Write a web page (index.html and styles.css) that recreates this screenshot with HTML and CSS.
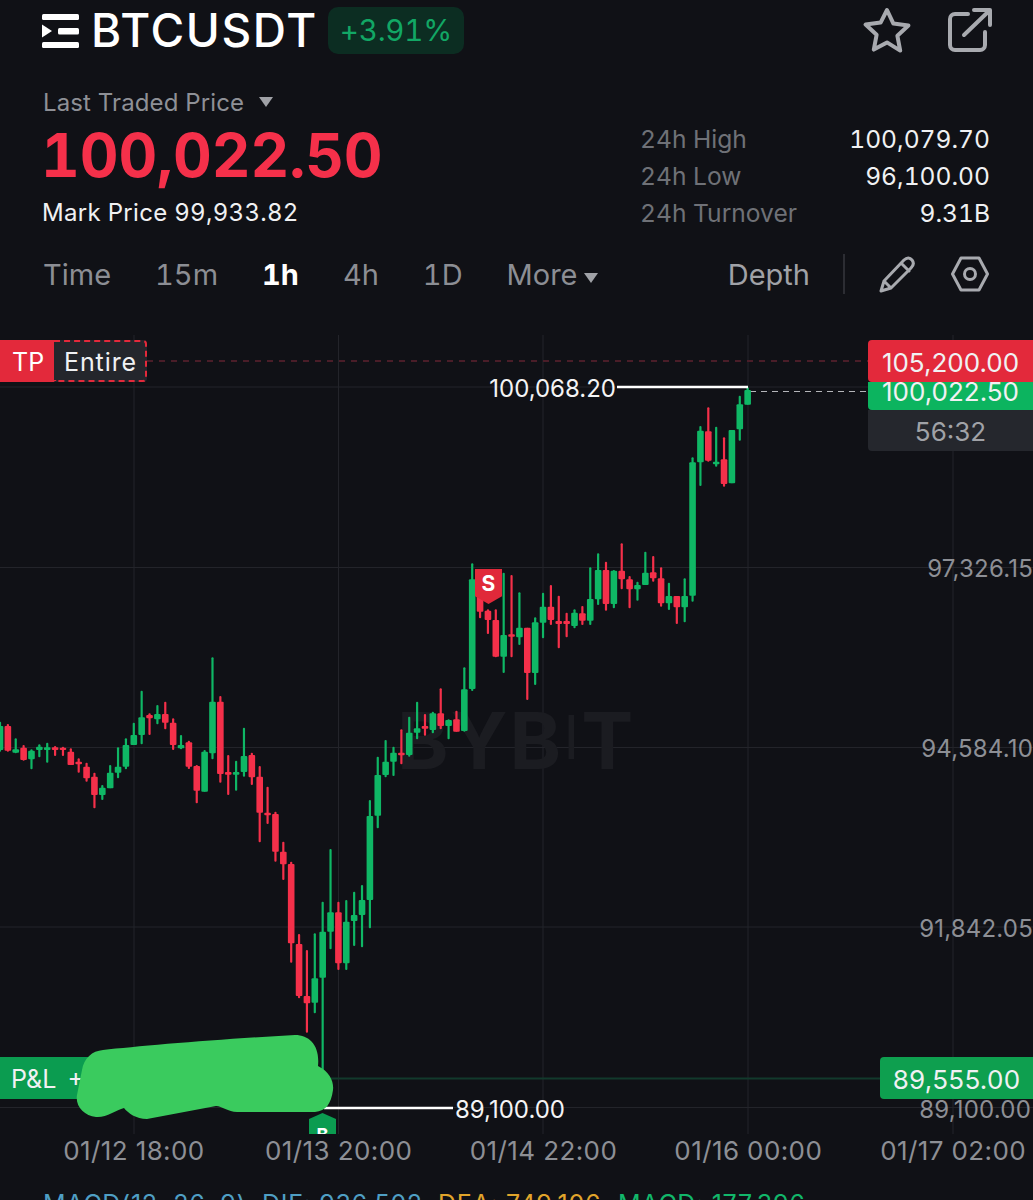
FILE: index.html
```html
<!DOCTYPE html>
<html lang="en">
<head>
    <meta charset="UTF-8">
    <meta name="viewport" content="width=device-width, initial-scale=1.0">
    <title>BTCUSDT</title>
    <link rel="stylesheet" href="styles.css">
</head>
<body>
    <header class="top-bar">
        <svg class="menu-icon" viewBox="0 0 37 34" width="37" height="34">
            <rect x="0" y="0" width="37" height="6" rx="1.5"/>
            <rect x="16" y="14" width="21" height="6.5" rx="1.5"/>
            <rect x="0" y="28" width="37" height="6" rx="1.5"/>
            <polygon points="0,10.5 10,17 0,23.5"/>
        </svg>
        <div class="symbol">BTCUSDT</div>
        <div class="change-pill">+3.91%</div>
        <div class="top-actions">
            <svg viewBox="0 0 48 46" width="48" height="46">
                <path class="line-icon" d="M24 3l6.4 13.6 15 1.9-11 10.3 2.8 14.8L24 35.4l-13.2 7.2 2.8-14.8-11-10.3 15-1.9z"/>
            </svg>
            <svg viewBox="0 0 44 44" width="44" height="44">
                <path class="line-icon" d="M20 6H7a5 5 0 0 0-5 5v26a5 5 0 0 0 5 5h25a5 5 0 0 0 5-5V24"/>
                <path class="line-icon" d="M16 27L41 3M26 2h16v15"/>
            </svg>
        </div>
    </header>

    <section class="quote">
        <div class="quote-main">
            <div class="last-label">Last Traded Price <span class="caret"></span></div>
            <div class="last-price">100,022.50</div>
            <div class="mark-price">Mark Price 99,933.82</div>
        </div>
        <div class="stats">
            <div class="stat-row"><span class="stat-name">24h High</span><span>100,079.70</span></div>
            <div class="stat-row"><span class="stat-name">24h Low</span><span>96,100.00</span></div>
            <div class="stat-row"><span class="stat-name">24h Turnover</span><span>9.31B</span></div>
        </div>
    </section>

    <nav class="tabs">
        <span>Time</span>
        <span>15m</span>
        <span class="tab-active">1h</span>
        <span>4h</span>
        <span>1D</span>
        <span class="tab-more">More<span class="caret"></span></span>
        <span class="tab-depth">Depth</span>
        <span class="tab-divider"></span>
        <svg viewBox="0 0 36 37" width="36" height="37">
            <path class="line-icon thin" d="M2 35l3-10L25 4c3-3 6-2.500 8 0s2 5-1 8L12 32zM5 25l7 7M22 7l8 8"/>
        </svg>
        <svg class="hex-icon" viewBox="0 0 38 36" width="38" height="36">
            <path class="line-icon thin" d="M10 2h18l8.500 16L28 34H10L1.500 18z"/>
            <circle class="line-icon thin" cx="19" cy="18" r="5.500"/>
        </svg>
    </nav>

    <section class="chart">
        <!-- viewBox uses page coordinates so the candle data reads straight off the screen -->
        <svg id="candles" class="chart-svg" viewBox="0 335 1033 799" width="1033" height="799">
            <g class="grid">
                <line x1="134" y1="335" x2="134" y2="1134"/>
                <line x1="338.500" y1="335" x2="338.500" y2="1134"/>
                <line x1="543" y1="335" x2="543" y2="1134"/>
                <line x1="748" y1="335" x2="748" y2="1134"/>
                <line x1="953" y1="335" x2="953" y2="1134"/>
                <line x1="0" y1="387" x2="1033" y2="387"/>
                <line x1="0" y1="567.500" x2="1033" y2="567.500"/>
                <line x1="0" y1="747.500" x2="1033" y2="747.500"/>
                <line x1="0" y1="927" x2="1033" y2="927"/>
                <line x1="0" y1="1107.500" x2="1033" y2="1107.500"/>
            </g>
            <text class="watermark" x="397" y="769">BYB<tspan class="watermark-i" dy="-10">I</tspan><tspan dy="10">T</tspan></text>
            <line class="tp-line" x1="147" y1="361" x2="868" y2="361"/>
            <line class="last-line" x1="750" y1="391.500" x2="868" y2="391.500"/>
            <line class="pnl-line" x1="330" y1="1078.500" x2="880" y2="1078.500"/>
            <line class="extreme-line" x1="617" y1="387" x2="748" y2="387"/>
            <line class="extreme-line" x1="324" y1="1108" x2="453" y2="1108"/>
        </svg>

        <div class="extreme extreme-high">100,068.20</div>
        <div class="extreme extreme-low">89,100.00</div>

        <div class="axis-price axis-1">97,326.15</div>
        <div class="axis-price axis-2">94,584.10</div>
        <div class="axis-price axis-3">91,842.05</div>
        <div class="axis-price axis-4">89,100.00</div>

        <div class="tp-tag">
            <span class="tp-name">TP</span>
            <span class="tp-scope">Entire</span>
        </div>

        <div class="price-stack">
            <div class="stack-tp">105,200.00</div>
            <div class="stack-last">100,022.50</div>
            <div class="stack-count">56:32</div>
        </div>

        <div class="pnl-tag">P&amp;L +</div>
        <div class="entry-tag">89,555.00</div>

        <div class="sell-mark">S</div>
        <div class="buy-mark">B</div>

        <svg class="scribble" viewBox="75 1033 260 88" width="260" height="88">
            <path d="M103 1050C140 1046 220 1039 295 1035C310 1035 320 1046 318 1066C330 1072 334 1082 333 1090C331 1104 326 1111 315 1112L237 1112C228 1112 222 1106 216 1106L147 1119C136 1119 128 1113 124 1108C116 1110 106 1118 96 1117C84 1116 75 1106 77 1095L82 1070C84 1058 92 1051 103 1050Z"/>
        </svg>
    </section>

    <div class="x-axis">
        <span>01/12 18:00</span>
        <span>01/13 20:00</span>
        <span>01/14 22:00</span>
        <span>01/16 00:00</span>
        <span>01/17 02:00</span>
    </div>

    <div class="macd">
        <span class="macd-name">MACD(12, 26, 9)</span>
        <span class="macd-dif">DIF: 936.502</span>
        <span class="macd-dea">DEA: 749.106</span>
        <span class="macd-val">MACD: 177.396</span>
    </div>

    <script src="chart.js"></script>
</body>
</html>
```

FILE: styles.css
```css
* {
    box-sizing: border-box;
}

html, body {
    margin: 0;
    padding: 0;
    height: 1200px;
    overflow: hidden;
}

body {
    background-color: #101116;
    color: #f0f1f3;
    font-family: 'Inter', 'Liberation Sans', sans-serif;
    font-size: 25px;
}

.line-icon {
    fill: none;
    stroke: #a8aaaf;
    stroke-width: 4;
    stroke-linejoin: round;
    stroke-linecap: round;
}

.line-icon.thin {
    stroke-width: 3;
}

/* top bar */
.top-bar {
    display: flex;
    align-items: center;
    height: 60px;
    padding: 0 41px 0 42px;
}

.menu-icon {
    fill: #fff;
    margin-top: 1px;
}

.symbol {
    margin-left: 12px;
    font-size: 46px;
    font-weight: 500;
    line-height: 60px;
    color: #fff;
    letter-spacing: 1.6px;
}

.change-pill {
    margin-left: 10px;
    padding: 0 12px;
    height: 47px;
    line-height: 47px;
    border-radius: 10px;
    background-color: #0c2d22;
    color: #12a765;
    font-size: 29.500px;
    letter-spacing: -0.2px;
    font-variant-numeric: tabular-nums;
}

.top-actions {
    display: flex;
    align-items: center;
    gap: 37px;
    margin-left: auto;
}

/* price block */
.quote {
    display: flex;
    justify-content: space-between;
    align-items: flex-end;
    height: 172px;
    padding: 27px 43px 0;
}

.last-label {
    height: 30px;
    line-height: 34px;
    color: #8e9096;
    font-size: 24px;
    letter-spacing: 0.1px;
}

.caret {
    display: inline-block;
    width: 0;
    height: 0;
    margin-left: 8px;
    vertical-align: 4px;
    border-left: 7px solid transparent;
    border-right: 7px solid transparent;
    border-top: 10px solid #a0a2a7;
}

.last-price {
    height: 76px;
    margin-left: -2px;
    line-height: 78px;
    color: #f5304a;
    font-size: 60px;
    font-weight: 700;
    letter-spacing: -0.1px;
    font-variant-numeric: tabular-nums;
}

.mark-price {
    height: 40px;
    margin-left: -1px;
    line-height: 42px;
    font-size: 24px;
    letter-spacing: 0.3px;
    font-variant-numeric: tabular-nums;
}

.stats {
    width: 349px;
    font-size: 24.600px;
    font-variant-numeric: tabular-nums;
}

.stat-row {
    display: flex;
    justify-content: space-between;
    line-height: 37px;
}

.stat-name {
    margin-left: -1px;
    color: #6f7177;
}

/* time frame tabs */
.tabs {
    display: flex;
    align-items: center;
    gap: 44px;
    height: 84px;
    padding: 0 44px 0 43px;
    margin-bottom: 19px;
    color: #8c8e94;
    font-size: 29px;
    font-variant-numeric: tabular-nums;
}

.tab-active {
    color: #fff;
    font-weight: 700;
}

.tab-more .caret {
    margin-left: 6px;
    vertical-align: 2px;
}

.tab-depth {
    margin-left: auto;
    margin-right: -11px;
    color: #a0a2a7;
}

.tab-divider {
    width: 2px;
    height: 40px;
    margin-right: -10px;
    background-color: #2c2d33;
}

.hex-icon {
    margin-left: -8px;
}

/* chart canvas, top edge sits at y = 335 */
.chart {
    position: relative;
    height: 799px;
}

.chart-svg {
    display: block;
}

.grid line {
    stroke: #23242a;
    stroke-width: 1;
}

.watermark {
    fill: #1b1c21;
    font-size: 78px;
    font-weight: 700;
    letter-spacing: 2px;
}

.watermark-i {
    font-size: 60px;
    font-weight: 400;
}

.tp-line {
    stroke: #4a1d28;
    stroke-width: 2;
    stroke-dasharray: 6 6;
}

.last-line {
    stroke: #b5b6ba;
    stroke-width: 1;
    stroke-dasharray: 6 5;
}

.pnl-line {
    stroke: #123a2c;
    stroke-width: 2;
}

.extreme-line {
    stroke: #fff;
    stroke-width: 2.500;
}

.extreme {
    position: absolute;
    line-height: 30px;
    color: #f4f4f5;
    font-size: 24px;
}

.extreme-high {
    right: 417px;
    top: 39px;
}

.extreme-low {
    left: 455px;
    top: 760px;
}

.axis-price {
    position: absolute;
    right: 0;
    line-height: 30px;
    color: #8d8f95;
    font-size: 24px;
    letter-spacing: 0.2px;
}

.axis-1 { top: 219px; }
.axis-2 { top: 399px; }
.axis-3 { top: 579px; }
.axis-4 { top: 760px; right: 2px; }

.tp-tag {
    position: absolute;
    left: 0;
    top: 5px;
    display: flex;
    height: 42px;
    line-height: 44px;
}

.tp-name {
    width: 54px;
    padding-left: 12px;
    background-color: #e3293b;
    color: #fff;
}

.tp-scope {
    width: 93px;
    padding-left: 10px;
    line-height: 40px;
    letter-spacing: 0.9px;
    border: 2px dashed #e3293b;
    border-left: none;
    border-radius: 0 4px 4px 0;
    background-color: #24262c;
}

.price-stack {
    position: absolute;
    right: 0;
    top: 5px;
    width: 165px;
    text-align: center;
    font-size: 26px;
}

.stack-tp {
    position: relative;
    height: 42px;
    line-height: 46px;
    border-radius: 4px 0 0 4px;
    background-color: #e3293b;
}

.stack-last {
    height: 28px;
    line-height: 20px;
    border-bottom-left-radius: 4px;
    background-color: #0cb45f;
}

.stack-count {
    height: 41px;
    line-height: 43px;
    border-radius: 0 0 0 4px;
    background-color: #25272d;
    color: #a0a2a7;
}

.pnl-tag {
    position: absolute;
    left: 0;
    top: 722px;
    width: 100px;
    height: 42px;
    padding-left: 11px;
    line-height: 44px;
    word-spacing: 4px;
    background-color: #0b9c50;
}

.entry-tag {
    position: absolute;
    right: 0;
    top: 722px;
    width: 153px;
    height: 42px;
    line-height: 45px;
    text-align: center;
    font-size: 26px;
    letter-spacing: 0.3px;
    border-radius: 4px 0 0 4px;
    background-color: #0e9f4f;
}

.sell-mark {
    position: absolute;
    left: 475px;
    top: 234px;
    width: 27px;
    height: 35px;
    padding-top: 2px;
    text-align: center;
    clip-path: polygon(0 0, 100% 0, 100% 78%, 50% 100%, 0 78%);
    background-color: #e0293a;
    color: #fff;
    font-size: 21px;
    font-weight: 700;
}

.buy-mark {
    position: absolute;
    left: 309px;
    top: 778px;
    width: 27px;
    height: 21px;
    padding-top: 12px;
    overflow: hidden;
    line-height: 20px;
    text-align: center;
    clip-path: polygon(50% 0, 100% 28%, 100% 100%, 0 100%, 0 28%);
    background-color: #0b9c50;
    color: #fff;
    font-size: 18px;
    font-weight: 700;
}

.scribble {
    position: absolute;
    left: 75px;
    top: 698px;
    fill: #3acb5e;
}

/* under the chart */
.x-axis {
    display: grid;
    grid-template-columns: repeat(5, 204.800px);
    margin-left: 31.500px;
    height: 55px;
    line-height: 34px;
    text-align: center;
    color: #8d8f95;
    font-size: 26px;
    letter-spacing: 0.4px;
}

.macd {
    display: flex;
    padding-left: 43px;
    line-height: 30px;
    font-size: 25px;
    letter-spacing: 0.7px;
}

.macd-name { width: 219px; color: #4f9fc4; }
.macd-dif { width: 176px; color: #4f9fc4; }
.macd-dea { width: 180px; color: #e2a52b; }
.macd-val { color: #12b76a; }
```

FILE: chart.js
```js
// One candle per row: 'g' or 'r', wick top, wick bottom, body top, body bottom.
// Values are thirds of a pixel below the block's "top", candles are 7.87px apart.
const blocks = [
    { top: 650, rows: [
        ['g',215,305,228,300], ['r',222,305,228,302], ['g',265,310,298,308], ['r',285,332,293,330],
        ['g',298,358,302,328], ['g',283,322,290,300], ['g',278,338,292,300], ['r',288,318,292,300],
        ['r',290,318,293,300], ['r',295,345,305,345], ['r',325,368,335,343], ['r',338,395,350,385],
        ['r',368,475,380,435], ['g',405,450,413,435], ['g',345,415,368,415], ['g',292,385,350,368],
        ['g',265,358,285,350], ['g',218,285,255,285], ['g',122,283,202,255], ['r',190,255,195,205],
        ['g',165,223,192,208], ['r',155,238,192,218], ['r',205,300,218,285], ['g',255,298,285,295],
        ['r',272,357,277,350], ['r',345,460,348,422], ['g',300,425,305,425], ['g',22,328,155,310],
        ['r',138,398,155,372], ['r',315,435,366,374], ['g',332,422,366,374], ['g',233,380,318,366],
        ['r',308,405,315,382], ['r',348,577,380,488], ['r',410,522,488,496], ['r',485,635,492,605],
        ['r',575,690,605,643]
    ] },
    { top: 620, rows: [
        ['r',725,1028,732,970], ['r',942,1135,972,1128], ['r',990,1238,1128,1150], ['g',940,1180,1075,1148],
        ['g',845,1464,935,1073], ['g',687,988,877,935], ['r',845,1050,877,1030], ['g',840,1050,905,1030],
        ['g',815,978,885,903], ['g',795,982,840,885], ['g',540,925,588,840], ['g',410,625,465,587],
        ['g',360,472,425,465], ['g',380,468,398,425], ['r',328,433,398,406], ['g',290,410,338,405],
        ['g',245,358,325,338], ['r',282,347,318,326], ['g',275,340,280,330], ['r',205,328,280,318],
        ['g',298,358,300,318], ['r',272,335,298,335], ['g',142,335,208,333]
    ] },
    { top: 330, rows: [
        ['g',700,1083,748,1077], ['r',748,865,790,845], ['r',838,912,842,870], ['r',838,982,870,980],
        ['g',728,1029,915,980], ['r',735,982,913,920], ['g',787,945,893,922], ['r',893,1110,893,1029],
        ['g',862,1065,877,1029], ['g',788,925,830,878], ['r',765,885,830,870], ['r',797,955,873,882],
        ['r',848,922,873,882], ['g',838,895,848,888], ['r',828,885,850,872], ['g',712,885,807,872],
        ['g',670,825,720,808], ['r',695,842,720,822], ['g',720,835,722,822], ['r',640,778,722,748],
        ['r',738,835,748,778], ['g',755,812,765,778], ['g',665,765,728,765], ['r',678,755,727,745],
        ['r',712,830,745,820], ['g',758,840,798,820], ['r',798,882,798,832], ['g',745,877,798,832],
        ['g',382,815,397,797], ['g',288,468,302,397], ['r',232,395,304,392], ['g',290,410,395,403],
        ['r',322,470,388,462], ['g',300,460,300,460], ['g',197,332,223,298], ['g',172,224,180,224]
    ] }
];

const colors = { g: '#0fb765', r: '#f5304a' };
const svg = document.getElementById('candles');
const firstMark = svg.querySelector('.extreme-line');

function addRect(x, y, width, height, fill, radius) {
    const rect = document.createElementNS('http://www.w3.org/2000/svg', 'rect');
    rect.setAttribute('x', x);
    rect.setAttribute('y', y);
    rect.setAttribute('width', width);
    rect.setAttribute('height', height);
    rect.setAttribute('fill', fill);
    rect.setAttribute('rx', radius);
    svg.insertBefore(rect, firstMark);
}

let index = 0;
blocks.forEach(block => {
    block.rows.forEach(([color, wickTop, wickBottom, bodyTop, bodyBottom]) => {
        const x = index * 7.87;
        const y = value => block.top + value / 3;
        addRect(x - 1.1, y(wickTop), 2.2, (wickBottom - wickTop) / 3, colors[color], 1);
        addRect(x - 3.3, y(bodyTop), 6.6, Math.max((bodyBottom - bodyTop) / 3, 2), colors[color], 1);
        index++;
    });
});
```
